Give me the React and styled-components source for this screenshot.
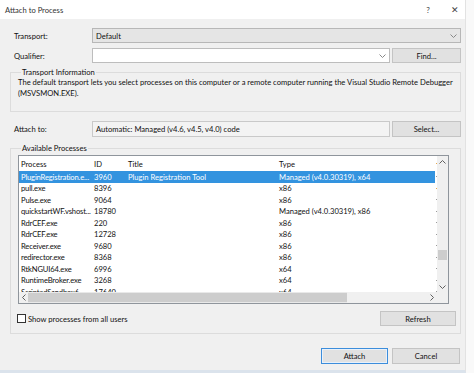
import styled, { createGlobalStyle } from "styled-components";

const GlobalStyle = createGlobalStyle`
  html, body { margin: 0; padding: 0; background: #f9f9f9; }
  body {
    font-family: Lato, "Noto Sans", sans-serif;
    font-size: 7.6px;
    color: #111;
  }
  #root { width: 474px; height: 373px; overflow: hidden; }
  * { box-sizing: border-box; }
`;

const Window = styled.div`
  width: 466px;
  height: 373px;
  background: #f0f0f0;
  border-right: 1px solid #e2e2e2;
  border-bottom: 3px solid #dbe3ec;
  display: flex;
  flex-direction: column;
`;

const TitleBar = styled.div`
  height: 19px;
  background: #fff;
  display: flex;
  align-items: center;
  padding-left: 5px;
  flex-shrink: 0;
`;

const TitleText = styled.div`
  flex: 1;
  color: #333;
`;

const TitleButton = styled.div`
  width: ${p => p.$w}px;
  text-align: center;
  font-size: ${p => p.$size || 8}px;
  color: #444;
`;

const Body = styled.div`
  flex: 1;
  display: flex;
  flex-direction: column;
  padding: 9px 4px 0 10px;
`;

const FieldRow = styled.div`
  display: flex;
  align-items: center;
  height: ${p => p.$h || 15}px;
  margin-top: ${p => p.$mt || 0}px;
  padding-left: 4px;
`;

const Label = styled.div`
  width: 78px;
  flex-shrink: 0;
`;

const Combo = styled.div`
  flex: 1;
  height: 100%;
  display: flex;
  align-items: center;
  justify-content: space-between;
  padding: 0 3px;
  background: ${p => (p.$readonly ? "#e5e5e5" : "#fff")};
  border: 1px solid ${p => (p.$readonly ? "#b7b7b7" : "#bdbdbd")};
`;

const TextBox = styled.div`
  flex: 1;
  height: 100%;
  display: flex;
  align-items: center;
  padding: 0 3px;
  background: #f3f3f3;
  border: 1px solid #c9c9c9;
`;

const Button = styled.div`
  width: ${p => p.$w || 69}px;
  height: ${p => p.$h || 15}px;
  margin-left: ${p => p.$ml || 0}px;
  flex-shrink: 0;
  display: flex;
  align-items: center;
  justify-content: center;
  background: #e1e1e1;
  border: 1px solid ${p => (p.$default ? "#3c8ddb" : "#c4c4c4")};
  box-shadow: ${p => (p.$default ? "inset 0 0 0 1px #e8f1fb" : "none")};
  color: #111;
`;

const Group = styled.fieldset`
  margin: ${p => p.$mt || 0}px 0 0;
  padding: ${p => p.$pad};
  border: 1px solid #dcdcdc;
  min-width: 0;
  display: flex;
  flex-direction: column;
`;

const Legend = styled.legend`
  padding: 0 1px;
  margin-left: 3px;
  line-height: 10px;
`;

const InfoText = styled.div`
  line-height: 11px;
  white-space: nowrap;
`;

const ListView = styled.div`
  width: 431px;
  height: 149px;
  border: 1px solid #8f959c;
  background: #fff;
  display: grid;
  grid-template-columns: 1fr 11px;
  grid-template-rows: 1fr 11px;
`;

const ListContent = styled.div`
  overflow: hidden;
`;

const ListRow = styled.div`
  display: flex;
  align-items: center;
  height: ${p => (p.$header ? 15 : 11.5)}px;
  background: ${p => (p.$selected ? "#3393df" : "transparent")};
  color: ${p => (p.$selected ? "#fff" : "#111")};
`;

const Cell = styled.div`
  width: ${p => p.$w}px;
  flex-shrink: 0;
  padding-left: 2px;
  white-space: nowrap;
  overflow: hidden;
  letter-spacing: ${p => (p.$tight ? "-0.15px" : "normal")};
`;

const DotCell = styled.div`
  flex: 1;
  height: 100%;
  display: flex;
  align-items: center;
  justify-content: center;
  background: #fff;
  &::after {
    content: "";
    width: 1px;
    height: 1px;
    background: ${p => p.$color || "#9a9a9a"};
  }
`;

const VScroll = styled.div`
  background: #f0f0f0;
  display: flex;
  flex-direction: column;
  align-items: center;
  justify-content: space-between;
  position: relative;
`;

const HScroll = styled.div`
  background: #e9e9e9;
  display: flex;
  align-items: center;
`;

const ScrollArrow = styled.div`
  width: ${p => p.$w || 11}px;
  height: 11px;
  display: flex;
  align-items: center;
  justify-content: center;
  flex-shrink: 0;
  background: #f0f0f0;
`;

const HThumb = styled.div`
  width: 319px;
  height: 9px;
  background: #cdcdcd;
`;

const HTrack = styled.div`
  flex: 1;
  height: 100%;
  background: #f0f0f0;
`;

const VThumb = styled.div`
  position: absolute;
  top: 94px;
  left: 1px;
  width: 9px;
  height: 10px;
  background: #cdcdcd;
`;

const Corner = styled.div`
  background: #f0f0f0;
`;

const BottomRow = styled.div`
  display: flex;
  align-items: center;
  justify-content: space-between;
  margin-top: 7px;
  height: 15px;
`;

const CheckLabel = styled.label`
  display: flex;
  align-items: center;
  gap: 2px;
  margin-left: -1px;
`;

const CheckBox = styled.span`
  width: 9px;
  height: 9px;
  border: 1px solid #333;
  background: #fff;
`;

const DialogButtons = styled.div`
  display: flex;
  justify-content: flex-end;
  gap: 4px;
  margin-top: 14px;
  padding-right: 1px;
`;

const Chevron = ({ dir = "down", color = "#888" }) => {
  const pts = {
    down: "0,0 3,3 6,0",
    up: "0,3 3,0 6,3",
    left: "3,0 0,3 3,6",
    right: "0,0 3,3 0,6",
  }[dir];
  const vertical = dir === "down" || dir === "up";
  return (
    <svg width={vertical ? 7 : 4} height={vertical ? 4 : 7} viewBox={vertical ? "-0.5 -0.5 7 4" : "-0.5 -0.5 4 7"}>
      <polyline points={pts} fill="none" stroke={color} strokeWidth="1" />
    </svg>
  );
};

const processes = [
  ["PluginRegistration.e...", "3960", "Plugin Registration Tool", "Managed (v4.0.30319), x64"],
  ["pull.exe", "8396", "", "x86"],
  ["Pulse.exe", "9064", "", "x86"],
  ["quickstartWF.vshost...", "18780", "", "Managed (v4.0.30319), x86"],
  ["RdrCEF.exe", "220", "", "x86"],
  ["RdrCEF.exe", "12728", "", "x86"],
  ["Receiver.exe", "9680", "", "x86"],
  ["redirector.exe", "8368", "", "x86"],
  ["RtkNGUI64.exe", "6996", "", "x64"],
  ["RuntimeBroker.exe", "3268", "", "x64"],
  ["ScriptedSandbox6...", "17640", "", "x64"],
];

const cols = [73, 34, 151, 158];

export default function App() {
  return (
    <>
      <GlobalStyle />
      <Window>
        <TitleBar>
          <TitleText>Attach to Process</TitleText>
          <TitleButton $w={34}>?</TitleButton>
          <TitleButton $w={20} $size={9}>✕</TitleButton>
        </TitleBar>
        <Body>
          <FieldRow $h={15}>
            <Label>Transport:</Label>
            <Combo $readonly>
              <span>Default</span>
              <Chevron />
            </Combo>
          </FieldRow>
          <FieldRow $h={15} $mt={5}>
            <Label>Qualifier:</Label>
            <Combo>
              <span />
              <Chevron />
            </Combo>
            <Button $ml={2}>Find...</Button>
          </FieldRow>

          <Group $mt={4} $pad="0 4px 12px 7px">
            <Legend>Transport Information</Legend>
            <InfoText>
              The default transport lets you select processes on this computer or a remote computer running the Visual Studio Remote Debugger
              <br />
              (MSVSMON.EXE).
            </InfoText>
          </Group>

          <FieldRow $h={16} $mt={9}>
            <Label>Attach to:</Label>
            <TextBox>Automatic: Managed (v4.6, v4.5, v4.0) code</TextBox>
            <Button $ml={2} $h={16}>Select...</Button>
          </FieldRow>

          <Group $mt={6} $pad="2px 4px 7px 7px">
            <Legend>Available Processes</Legend>
            <ListView>
              <ListContent>
                <ListRow $header>
                  {["Process", "ID", "Title", "Type"].map((h, i) => (
                    <Cell key={h} $w={cols[i]}>{h}</Cell>
                  ))}
                  <DotCell $color="#e9a84c" />
                </ListRow>
                {processes.map((p, r) => (
                  <ListRow key={r} $selected={r === 0}>
                    {p.map((v, i) => (
                      <Cell key={i} $w={cols[i]} $tight={i === 0}>{v}</Cell>
                    ))}
                    <DotCell $color={r === 1 ? "#e9a84c" : "#9a9a9a"} />
                  </ListRow>
                ))}
              </ListContent>
              <VScroll>
                <ScrollArrow><Chevron dir="up" color="#606060" /></ScrollArrow>
                <VThumb />
                <ScrollArrow><Chevron dir="down" color="#606060" /></ScrollArrow>
              </VScroll>
              <HScroll>
                <ScrollArrow $w={9}><Chevron dir="left" color="#606060" /></ScrollArrow>
                <HThumb />
                <HTrack />
                <ScrollArrow $w={11}><Chevron dir="right" color="#606060" /></ScrollArrow>
              </HScroll>
              <Corner />
            </ListView>
            <BottomRow>
              <CheckLabel>
                <CheckBox />
                Show processes from all users
              </CheckLabel>
              <Button $w={76}>Refresh</Button>
            </BottomRow>
          </Group>

          <DialogButtons>
            <Button $w={67} $h={16} $default>Attach</Button>
            <Button $w={68} $h={16}>Cancel</Button>
          </DialogButtons>
        </Body>
      </Window>
    </>
  );
}
